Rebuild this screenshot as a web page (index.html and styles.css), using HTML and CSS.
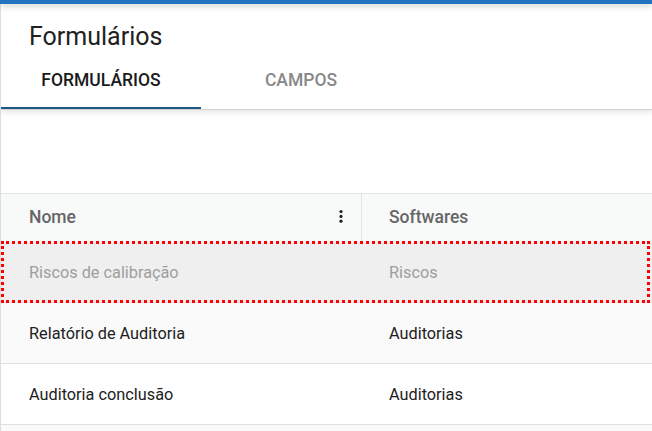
FILE: index.html
```html
<!DOCTYPE html>
<html lang="pt">
<head>
<meta charset="utf-8">
<title>Formulários</title>
<link rel="stylesheet" href="styles.css">
</head>
<body>
<div class="topbar"></div>
<div class="page">
  <header class="card">
    <h1 class="title">Formulários</h1>
    <nav class="tabs">
      <div class="tab active">FORMULÁRIOS</div>
      <div class="tab">CAMPOS</div>
    </nav>
  </header>
  <section class="table">
    <div class="row head">
      <div class="cell first">
        <span>Nome</span>
        <svg class="kebab" width="4" height="14" viewBox="0 0 4 14"><circle cx="2" cy="1.6" r="1.6"/><circle cx="2" cy="6.4" r="1.6"/><circle cx="2" cy="11.2" r="1.6"/></svg>
      </div>
      <div class="cell">Softwares</div>
    </div>
    <div class="row selected">
      <div class="cell first">Riscos de calibração</div>
      <div class="cell">Riscos</div>
    </div>
    <div class="row alt">
      <div class="cell first">Relatório de Auditoria</div>
      <div class="cell">Auditorias</div>
    </div>
    <div class="row">
      <div class="cell first">Auditoria conclusão</div>
      <div class="cell">Auditorias</div>
    </div>
    <div class="row alt"></div>
  </section>
</div>
</body>
</html>
```
FILE: styles.css
```css
* { box-sizing: border-box; }
html, body { margin: 0; padding: 0; }
body {
  background: #ffffff;
  font-family: Roboto, "Noto Sans", Arial, sans-serif;
  color: #212121;
  overflow: hidden;
  height: 431px;
}
.topbar {
  height: 4px;
  background: #2174bf;
  box-shadow: 0 2px 6px rgba(0,0,0,0.22);
  position: relative;
  z-index: 2;
}
.page {
  border-left: 1px solid #dedede;
  height: 427px;
  overflow: hidden;
}
.card {
  background: #fff;
  border-bottom: 1px solid #d2d2d2;
  box-shadow: 0 2px 6px rgba(0,0,0,0.12);
}
.title {
  margin: 0;
  padding: 18px 0 0 28px;
  font-size: 25px;
  font-weight: 400;
  line-height: 30px;
  color: #212121;
}
.tabs {
  display: flex;
}
.tab {
  width: 200px;
  height: 57px;
  padding-top: 18px;
  text-align: center;
  font-size: 17.5px;
  font-weight: 500;
  line-height: 20px;
  color: #888888;
  border-bottom: 2px solid transparent;
}
.tab.active {
  color: #1a1a1a;
  border-bottom-color: #1b5a85;
}
.table {
  margin-top: 83px;
  border-top: 1px solid #e2e2e2;
}
.row {
  display: grid;
  grid-template-columns: 361px 1fr;
  height: 61px;
  border-bottom: 1px solid #e0e0e0;
  align-items: center;
  font-size: 16.3px;
  position: relative;
}
.row.head {
  height: 48px;
  border-bottom: none;
  background: #f8f9f9;
  color: #666666;
  font-size: 17.5px;
  font-weight: 500;
  align-items: stretch;
}
.cell {
  padding-left: 27px;
}
.cell.first {
  padding-left: 28px;
}
.head .cell {
  display: flex;
  align-items: center;
  padding-bottom: 2px;
}
.head .cell.first {
  border-right: 1px solid #e2e2e2;
  justify-content: space-between;
  padding-right: 18px;
}
.kebab { fill: #222; }
.row.selected {
  background: #efefef;
  color: #9e9e9e;
}
.row.selected::after {
  content: "";
  position: absolute;
  left: 0;
  right: 2px;
  top: -1px;
  bottom: -1px;
  border: 3px dotted #ff0000;
  pointer-events: none;
}
.row.alt {
  background: #fafafa;
}
```
